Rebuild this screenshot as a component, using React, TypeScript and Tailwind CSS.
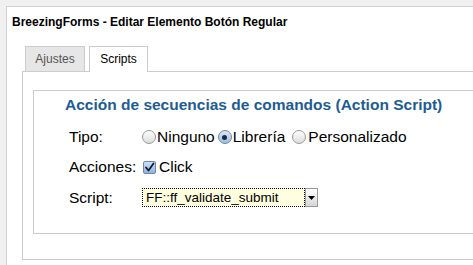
import React from 'react'

function Radio({ checked }: { checked?: boolean }) {
  return (
    <span
      className={
        checked
          ? 'inline-flex h-[14px] w-[14px] shrink-0 items-center justify-center rounded-full border border-[#6f86a8] bg-gradient-to-b from-[#dbe8f8] to-[#9cbde6]'
          : 'inline-flex h-[14px] w-[14px] shrink-0 items-center justify-center rounded-full border border-[#9a9a9a] bg-gradient-to-b from-[#ffffff] to-[#dcdcdc]'
      }
    >
      {checked && <span className="h-[5px] w-[5px] rounded-full bg-[#1d2a3a]" />}
    </span>
  )
}

function Checkbox() {
  return (
    <span className="inline-flex h-[13px] w-[13px] shrink-0 items-center justify-center rounded-[2px] border border-[#6f86a8] bg-gradient-to-b from-[#cfe0f5] to-[#8fb2e0]">
      <svg width="11" height="11" viewBox="0 0 11 11" fill="none">
        <path d="M2 5.5 L4.5 8.5 L9.5 1.5" stroke="#0f1c2e" strokeWidth="1.8" strokeLinecap="round" strokeLinejoin="round" />
      </svg>
    </span>
  )
}

export default function App() {
  return (
    <div className="h-[265px] w-[473px] overflow-hidden bg-[#f0f0f0] pl-[6px] pt-[6px] font-['Liberation_Sans',Arial,sans-serif] text-black">
      <div className="h-[280px] w-[480px] border-l border-t border-[#d0d0d0] bg-white">
        <div className="pl-[5px] pt-[8px] text-[12px] font-bold leading-[14px]">
          BreezingForms - Editar Elemento Botón Regular
        </div>

        {/* tabs */}
        <div className="ml-[18px] mt-[17px] flex gap-[4px]">
          <div className="flex h-[25px] w-[60px] items-center justify-center border border-b-0 border-[#cccccc] bg-[#e6e6e6] text-[12px] text-[#555555]">
            Ajustes
          </div>
          <div className="relative z-10 -mb-px flex h-[26px] w-[59px] items-center justify-center border border-b-0 border-[#cccccc] bg-white pb-px text-[12px] text-black">
            Scripts
          </div>
        </div>

        {/* tab content */}
        <div className="ml-[15px] h-[189px] w-[470px] border border-[#cccccc] px-[10px] pt-[18px]">
          <div className="h-[144px] border border-[#cccccc] pl-[31px] pt-[5px]">
            <div className="text-[15.5px] font-bold leading-[18px] text-[#1d5c93]">
              Acción de secuencias de comandos (Action Script)
            </div>

            <div className="mt-[14px] flex items-center text-[15.5px] leading-[18px]">
              <span className="w-[77px] pl-[4px]">Tipo:</span>
              <span className="flex items-center">
                <Radio />
                <span className="ml-[1px]">Ninguno</span>
              </span>
              <span className="ml-[3px] flex items-center">
                <Radio checked />
                <span className="ml-[1px]">Librería</span>
              </span>
              <span className="ml-[7px] flex items-center">
                <Radio />
                <span className="ml-[2px]">Personalizado</span>
              </span>
            </div>

            <div className="mt-[12px] flex items-center text-[15.5px] leading-[18px]">
              <span className="w-[78px] pl-[4px]">Acciones:</span>
              <Checkbox />
              <span className="ml-[3px]">Click</span>
            </div>

            <div className="mt-[12px] flex items-center text-[15.5px] leading-[18px]">
              <span className="w-[77px] pl-[4px]">Script:</span>
              <div className="flex h-[19px] w-[176px] items-stretch">
                <div className="flex flex-1 items-center border border-dotted border-black bg-[#ffffe0] pl-[3px] text-[13.5px]">
                  FF::ff_validate_submit
                </div>
                <div className="flex w-[13px] items-center justify-center border border-[#9a9a9a] bg-gradient-to-b from-[#ffffff] to-[#d6d6d6]">
                  <svg width="7" height="4" viewBox="0 0 7 4">
                    <path d="M0 0 H7 L3.5 4 Z" fill="#000" />
                  </svg>
                </div>
              </div>
            </div>
          </div>
        </div>
      </div>
    </div>
  )
}
